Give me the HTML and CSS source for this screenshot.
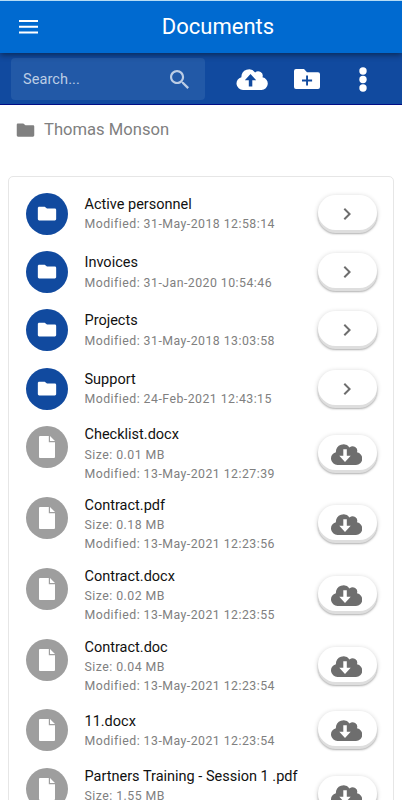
FILE: index.html
```html
<!DOCTYPE html>
<html lang="en">
  <head>
    <meta charset="UTF-8" />
    <meta name="viewport" content="width=device-width, initial-scale=1.0" />
    <title>Documents</title>
    <link rel="stylesheet" href="styles.css">
  </head>
  <body>
    <!-- Shared icons -->
    <svg class="icon-defs" width="0" height="0">
      <symbol id="folder" viewBox="0 0 24 24">
        <path d="M9.500 4H3.500C2.600 4 2 4.600 2 5.500v12c0 .9.6 1.500 1.500 1.500h17c.9 0 1.500-.6 1.500-1.500V7.500c0-.9-.6-1.500-1.500-1.500H12z" />
      </symbol>
      <symbol id="file" viewBox="0 0 16 22">
        <path d="M1 0h8.800v6.200H16V21a1 1 0 0 1-1 1H1a1 1 0 0 1-1-1V1a1 1 0 0 1 1-1zM11 0l5 5h-5z" />
      </symbol>
      <symbol id="chevron" viewBox="0 0 24 24">
        <path d="M10 6L8.590 7.410 13.170 12l-4.580 4.590L10 18l6-6z" />
      </symbol>
      <symbol id="cloud-down" viewBox="0 0 31 22">
        <path fill-rule="evenodd" d="M6.500 22A6.500 6.500 0 0 1 4.900 9.200A7.600 7.600 0 0 1 18.600 4.400A4.600 4.600 0 0 1 26 9.300A6.400 6.400 0 0 1 25 22zM12.300 6.300v6.400H8.300L14 19l5.700-6.300h-3.900V6.300z" />
      </symbol>
      <symbol id="cloud-up" viewBox="0 0 31 22">
        <path fill-rule="evenodd" d="M6.500 22A6.500 6.500 0 0 1 4.900 9.200A7.600 7.600 0 0 1 18.600 4.400A4.600 4.600 0 0 1 26 9.300A6.400 6.400 0 0 1 25 22zM12.300 18.600v-6.300H8.300L14 6l5.700 6.300h-3.900v6.300z" />
      </symbol>
    </svg>

    <!-- Header -->
    <header class="header">
      <svg class="menu-icon" viewBox="0 0 19 14"><path d="M0 0h19v2H0zM0 5.700h19v2H0zM0 11.400h19v2H0z" /></svg>
      <h1>Documents</h1>
    </header>

    <!-- Toolbar -->
    <div class="toolbar">
      <div class="search">
        <span>Search...</span>
        <svg class="search-icon" viewBox="3 3 17.5 17.5"><path d="M15.5 14h-.79l-.28-.27C15.41 12.59 16 11.11 16 9.5 16 5.91 13.09 3 9.5 3S3 5.91 3 9.5 5.91 16 9.5 16c1.61 0 3.09-.59 4.23-1.57l.27.28v.79l5 4.99L20.49 19l-4.99-5zm-6 0C7.01 14 5 11.99 5 9.5S7.01 5 9.5 5 14 7.01 14 9.5 11.99 14 9.5 14z" /></svg>
      </div>
      <svg class="upload-icon"><use href="#cloud-up" /></svg>
      <svg class="new-folder-icon" viewBox="0 0 26 20"><path fill-rule="evenodd" d="M2 0h8l3 3.200h11a2 2 0 0 1 2 2V18a2 2 0 0 1-2 2H2a2 2 0 0 1-2-2V2a2 2 0 0 1 2-2zM12.100 6.500v4.100H8v1.900h4.100v4.100H14v-4.100h4.100v-1.900H14V6.500z" /></svg>
      <svg class="more-icon" viewBox="0 0 8 25"><circle cx="4" cy="4" r="3.700" /><circle cx="4" cy="12.500" r="3.700" /><circle cx="4" cy="21" r="3.700" /></svg>
    </div>

    <!-- Current folder -->
    <div class="breadcrumb">
      <svg class="breadcrumb-icon"><use href="#folder" /></svg>
      <span>Thomas Monson</span>
    </div>

    <!-- File list -->
    <div class="list">
      <div class="row">
        <div class="avatar folder"><svg><use href="#folder" /></svg></div>
        <div class="text"><h2>Active personnel</h2><p>Modified: 31-May-2018 12:58:14</p></div>
        <button class="action"><svg class="chevron"><use href="#chevron" /></svg></button>
      </div>
      <div class="row">
        <div class="avatar folder"><svg><use href="#folder" /></svg></div>
        <div class="text"><h2>Invoices</h2><p>Modified: 31-Jan-2020 10:54:46</p></div>
        <button class="action"><svg class="chevron"><use href="#chevron" /></svg></button>
      </div>
      <div class="row">
        <div class="avatar folder"><svg><use href="#folder" /></svg></div>
        <div class="text"><h2>Projects</h2><p>Modified: 31-May-2018 13:03:58</p></div>
        <button class="action"><svg class="chevron"><use href="#chevron" /></svg></button>
      </div>
      <div class="row">
        <div class="avatar folder"><svg><use href="#folder" /></svg></div>
        <div class="text"><h2>Support</h2><p>Modified: 24-Feb-2021 12:43:15</p></div>
        <button class="action"><svg class="chevron"><use href="#chevron" /></svg></button>
      </div>
      <div class="row tall">
        <div class="avatar"><svg><use href="#file" /></svg></div>
        <div class="text"><h2>Checklist.docx</h2><p>Size: 0.01 MB</p><p>Modified: 13-May-2021 12:27:39</p></div>
        <button class="action"><svg class="cloud"><use href="#cloud-down" /></svg></button>
      </div>
      <div class="row tall">
        <div class="avatar"><svg><use href="#file" /></svg></div>
        <div class="text"><h2>Contract.pdf</h2><p>Size: 0.18 MB</p><p>Modified: 13-May-2021 12:23:56</p></div>
        <button class="action"><svg class="cloud"><use href="#cloud-down" /></svg></button>
      </div>
      <div class="row tall">
        <div class="avatar"><svg><use href="#file" /></svg></div>
        <div class="text"><h2>Contract.docx</h2><p>Size: 0.02 MB</p><p>Modified: 13-May-2021 12:23:55</p></div>
        <button class="action"><svg class="cloud"><use href="#cloud-down" /></svg></button>
      </div>
      <div class="row tall">
        <div class="avatar"><svg><use href="#file" /></svg></div>
        <div class="text"><h2>Contract.doc</h2><p>Size: 0.04 MB</p><p>Modified: 13-May-2021 12:23:54</p></div>
        <button class="action"><svg class="cloud"><use href="#cloud-down" /></svg></button>
      </div>
      <div class="row">
        <div class="avatar"><svg><use href="#file" /></svg></div>
        <div class="text"><h2>11.docx</h2><p>Modified: 13-May-2021 12:23:54</p></div>
        <button class="action"><svg class="cloud"><use href="#cloud-down" /></svg></button>
      </div>
      <div class="row tall">
        <div class="avatar"><svg><use href="#file" /></svg></div>
        <div class="text"><h2>Partners Training - Session 1 .pdf</h2><p>Size: 1.55 MB</p></div>
        <button class="action"><svg class="cloud"><use href="#cloud-down" /></svg></button>
      </div>
    </div>
  </body>
</html>
```
FILE: styles.css
```css
* {
  box-sizing: border-box;
}

body {
  margin: 0;
  height: 800px;
  overflow: hidden;
  background-color: #fff;
  font-family: Roboto, Arial, sans-serif;
  display: flex;
  flex-direction: column;
}

svg {
  display: block;
  fill: currentColor;
}

.icon-defs {
  display: none;
}

/* Header */
.header {
  flex: none;
  display: grid;
  grid-template-columns: 60px 1fr 45px;
  align-items: center;
  height: 53px;
  padding-left: 19px;
  border-top: 1px solid #b5dcf5;
  background-color: #006ad0;
  color: #fff;
  box-shadow: 0 2px 6px rgba(0, 0, 0, 0.45);
  z-index: 1;
}

.header h1 {
  margin: 0 0 2px;
  font-size: 22px;
  font-weight: 400;
  text-align: center;
}

.menu-icon {
  width: 19px;
  height: 14px;
}

/* Toolbar */
.toolbar {
  flex: none;
  display: flex;
  align-items: center;
  height: 52px;
  padding-left: 11px;
  background-color: #114a9f;
  border-bottom: 1px solid #000d85;
  color: #fff;
}

.search {
  display: flex;
  align-items: center;
  justify-content: space-between;
  width: 194px;
  height: 42px;
  margin-top: 1px;
  padding: 0 16px 0 12px;
  border-radius: 4px;
  background-color: #2259a7;
  color: #bccde5;
  font-size: 14.5px;
  letter-spacing: 0.1px;
}

.search-icon {
  width: 19px;
  height: 19px;
}

.upload-icon {
  width: 32px;
  height: 22px;
  margin: 1px 0 0 31px;
}

.new-folder-icon {
  width: 26px;
  height: 20px;
  margin: 1px 0 0 26px;
}

.more-icon {
  width: 8px;
  height: 25px;
  margin: 1px 0 0 39px;
}

/* Current folder */
.breadcrumb {
  flex: none;
  display: flex;
  align-items: center;
  gap: 8px;
  height: 49px;
  padding-left: 15px;
  color: #808080;
  font-size: 16.6px;
}

.breadcrumb-icon {
  width: 21px;
  height: 21px;
  margin-top: 2px;
}

/* File list */
.list {
  flex: none;
  margin: 22px 8px 0 8px;
  padding: 8px 16px 20px 17px;
  border: 1px solid #e6e6e6;
  border-radius: 5px;
}

.row {
  display: flex;
  height: 58.4px;
  padding-top: 7.5px;
}

.row.tall {
  height: 70.83px;
}

.avatar {
  flex: none;
  display: flex;
  align-items: center;
  justify-content: center;
  width: 42px;
  height: 42px;
  border-radius: 50%;
  background-color: #9e9e9e;
  color: #fff;
}

.avatar svg {
  width: 16px;
  height: 22px;
}

.avatar.folder {
  background-color: #114a9f;
}

.avatar.folder svg {
  width: 22px;
  height: 22px;
}

.text {
  flex: 1;
  margin-top: 1.2px;
  margin-left: 16.5px;
  white-space: nowrap;
}

.tall .text {
  margin-top: -2px;
}

.text h2 {
  margin: 0;
  color: #111;
  font-size: 14.5px;
  font-weight: 400;
  line-height: 21px;
}

.text p {
  margin: 0;
  color: #808080;
  font-size: 12.3px;
  line-height: 19px;
  letter-spacing: 0.47px;
}

.text h2 + p {
  margin-top: 0.6px;
}

/* Round buttons on the right */
.action {
  flex: none;
  display: flex;
  align-items: center;
  justify-content: center;
  width: 59px;
  height: 35px;
  margin-top: 2px;
  padding: 3px 2px 0 0;
  border: none;
  border-radius: 18px;
  background-color: #fff;
  color: #6e6e6e;
  box-shadow: 0 3px 0 #dedede, 0 4px 2px rgba(0, 0, 0, 0.28), 0 1px 5px rgba(0, 0, 0, 0.2);
}

.tall .action {
  margin-top: 8.5px;
}

.chevron {
  width: 24px;
  height: 24px;
}

.cloud {
  width: 31px;
  height: 22px;
}
```
